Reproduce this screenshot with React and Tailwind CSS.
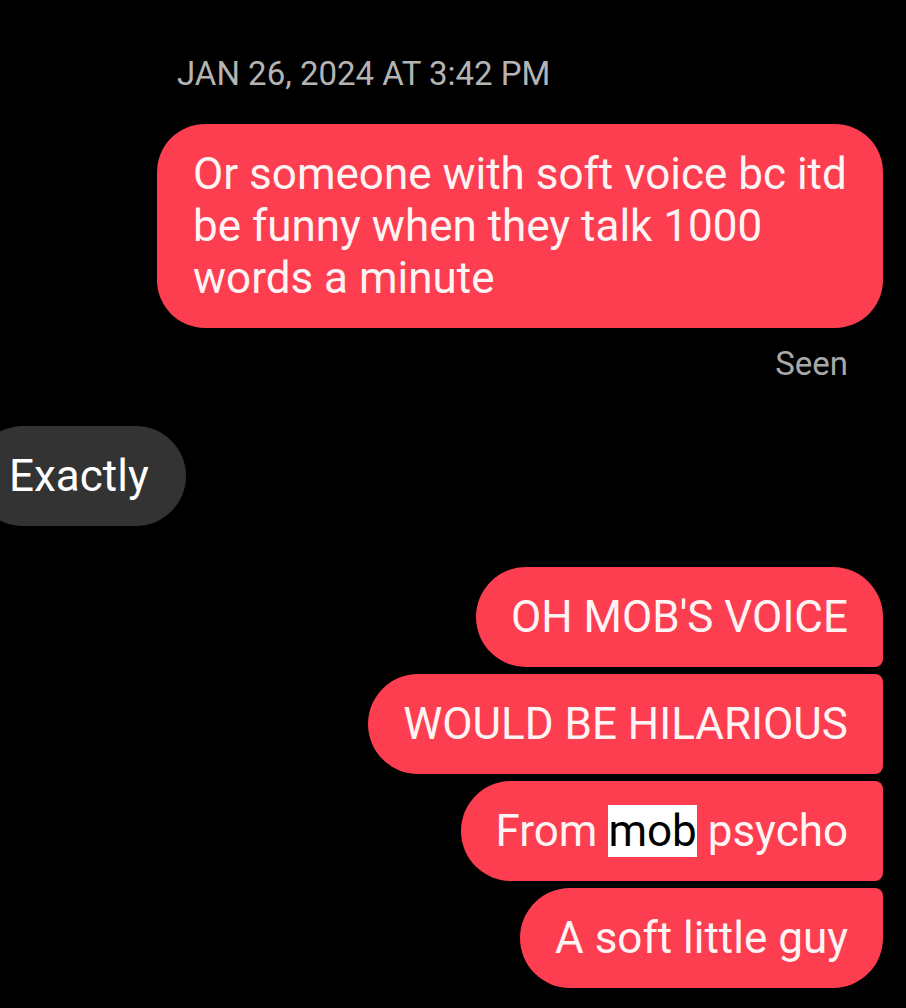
import React from "react";

const font = { fontFamily: "Roboto, 'Noto Sans', sans-serif" };

export default function App() {
  return (
    <div
      className="w-[906px] h-[1008px] bg-black overflow-hidden flex flex-col"
      style={font}
    >
      <div className="mt-[54px] pl-[177px] text-[33px] leading-[40px] text-[#b4b4b4]">
        JAN 26, 2024 AT 3:42 PM
      </div>

      <div className="mt-[30px] flex justify-end pr-[23px]">
        <div className="w-[726px] rounded-[48px] bg-[#fd3e51] pl-[36px] pr-[30px] pt-[24px] pb-[24px] text-[44px] leading-[52px] text-[#fff4f4]">
          Or someone with soft voice bc itd
          <br />
          be funny when they talk 1000
          <br />
          words a minute
        </div>
      </div>

      <div className="mt-[16px] pr-[58px] text-right text-[33px] leading-[40px] text-[#a8a8a8]">
        Seen
      </div>

      <div className="mt-[42px] flex">
        <div className="ml-[-27px] h-[100px] flex items-center rounded-full bg-[#333333] pl-[36px] pr-[37px] text-[44px] text-white">
          Exactly
        </div>
      </div>

      <div className="mt-[41px] flex flex-col items-end gap-[7px] pr-[23px] text-[44px] text-[#fff4f4]">
        <div className="h-[100px] flex items-center bg-[#fd3e51] pl-[35px] pr-[35px] rounded-tl-[50px] rounded-bl-[50px] rounded-tr-[50px] rounded-br-[8px]">
          OH MOB'S VOICE
        </div>
        <div className="h-[100px] flex items-center bg-[#fd3e51] pl-[35px] pr-[35px] rounded-tl-[50px] rounded-bl-[50px] rounded-tr-[8px] rounded-br-[8px]">
          WOULD BE HILARIOUS
        </div>
        <div className="h-[100px] flex items-center bg-[#fd3e51] pl-[35px] pr-[35px] rounded-tl-[50px] rounded-bl-[50px] rounded-tr-[8px] rounded-br-[8px]">
          <span>
            From <span className="bg-white text-black">mob</span> psycho
          </span>
        </div>
        <div className="h-[100px] flex items-center bg-[#fd3e51] pl-[35px] pr-[35px] rounded-tl-[50px] rounded-bl-[50px] rounded-tr-[8px] rounded-br-[50px]">
          A soft little guy
        </div>
      </div>
    </div>
  );
}
